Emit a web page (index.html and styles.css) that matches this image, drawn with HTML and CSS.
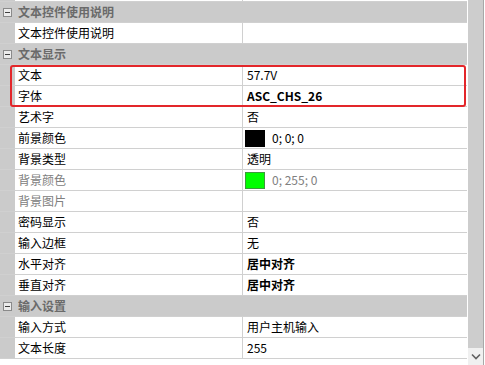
FILE: index.html
```html
<!DOCTYPE html>
<html>
<head>
  <meta charset="utf-8">
  <title>属性</title>
  <link rel="stylesheet" href="styles.css">
</head>
<body>
  <div class="panel">
    <!-- property grid -->
    <div class="grid">
      <div class="row cut"><div class="gutter"></div><div class="name"></div><div class="value"></div></div>

      <div class="row category"><div class="gutter"><span class="toggle"></span></div><div class="cat-title">文本控件使用说明</div></div>
      <div class="row"><div class="gutter"></div><div class="name">文本控件使用说明</div><div class="value"></div></div>

      <div class="row category"><div class="gutter"><span class="toggle"></span></div><div class="cat-title">文本显示</div></div>
      <div class="row"><div class="gutter"></div><div class="name">文本</div><div class="value">57.7V</div></div>
      <div class="row"><div class="gutter"></div><div class="name">字体</div><div class="value bold">ASC_CHS_26</div></div>
      <div class="row"><div class="gutter"></div><div class="name">艺术字</div><div class="value">否</div></div>
      <div class="row"><div class="gutter"></div><div class="name">前景颜色</div><div class="value"><span class="swatch black"></span>0; 0; 0</div></div>
      <div class="row"><div class="gutter"></div><div class="name">背景类型</div><div class="value">透明</div></div>
      <div class="row disabled"><div class="gutter"></div><div class="name">背景颜色</div><div class="value"><span class="swatch green"></span>0; 255; 0</div></div>
      <div class="row disabled"><div class="gutter"></div><div class="name">背景图片</div><div class="value"></div></div>
      <div class="row"><div class="gutter"></div><div class="name">密码显示</div><div class="value">否</div></div>
      <div class="row"><div class="gutter"></div><div class="name">输入边框</div><div class="value">无</div></div>
      <div class="row"><div class="gutter"></div><div class="name">水平对齐</div><div class="value bold">居中对齐</div></div>
      <div class="row"><div class="gutter"></div><div class="name">垂直对齐</div><div class="value bold">居中对齐</div></div>

      <div class="row category"><div class="gutter"><span class="toggle"></span></div><div class="cat-title">输入设置</div></div>
      <div class="row"><div class="gutter"></div><div class="name">输入方式</div><div class="value">用户主机输入</div></div>
      <div class="row"><div class="gutter"></div><div class="name">文本长度</div><div class="value">255</div></div>
    </div>

    <div class="scrollbar">
      <div class="thumb"></div>
      <div class="arrow">
        <svg width="10" height="7" viewBox="0 0 10 7"><path d="M1 1.5 L5 5.5 L9 1.5" fill="none" stroke="#606060" stroke-width="1.6"/></svg>
      </div>
    </div>

    <!-- highlight -->
    <div class="highlight"></div>
  </div>
</body>
</html>
```

FILE: styles.css
```css
body {
  margin: 0;
  background: #fff;
  font-family: "Noto Sans CJK SC", "Noto Sans", sans-serif;
  font-size: 12px;
  color: #000;
}

.panel {
  position: relative;
  display: flex;
  width: 485px;
  height: 365px;
  overflow: hidden;
}

.grid {
  width: 467px;
  flex: none;
}

.row {
  display: flex;
  height: 20px;
  line-height: 20px;
  border-bottom: 1px solid #d0d0d0;
}

.row.cut {
  height: 1px;
}

.gutter {
  width: 15px;
  flex: none;
  background: #cbcbcb;
  position: relative;
}

.name {
  width: 224px;
  flex: none;
  padding-left: 3px;
  border-right: 1px solid #d0d0d0;
  white-space: nowrap;
  overflow: hidden;
}

.value {
  flex: 1;
  padding-left: 4px;
  display: flex;
  align-items: center;
  white-space: nowrap;
}

.bold {
  font-weight: bold;
}

.disabled .name,
.disabled .value {
  color: #808080;
}

.category {
  background: #cbcbcb;
}

.cat-title {
  padding-left: 3px;
  font-weight: bold;
  color: #6a6a6a;
}

.toggle {
  position: absolute;
  left: 3px;
  top: 6px;
  width: 7px;
  height: 7px;
  border: 1px solid #8a8a8a;
  background: #ececec;
}

.toggle::after {
  content: '';
  position: absolute;
  left: 1px;
  top: 3px;
  width: 5px;
  height: 1px;
  background: #404040;
}

.swatch {
  width: 20px;
  height: 17px;
  margin-left: -2px;
  margin-right: 7px;
  box-sizing: border-box;
}

.swatch.black {
  background: #000;
}

.swatch.green {
  background: #00ff00;
  border: 1px solid #3c9a3c;
}

.scrollbar {
  width: 15px;
  margin-left: 1px;
  display: flex;
  flex-direction: column;
  border-right: 1px solid #a8a8a8;
}

.thumb {
  flex: 1;
  background: #cdcdcd;
}

.arrow {
  height: 17px;
  background: #f0f0f0;
  display: flex;
  align-items: center;
  justify-content: center;
}

.highlight {
  position: absolute;
  left: 10px;
  top: 65px;
  width: 452px;
  height: 38px;
  border: 2.5px solid #e3262a;
  border-radius: 3px;
}
```
